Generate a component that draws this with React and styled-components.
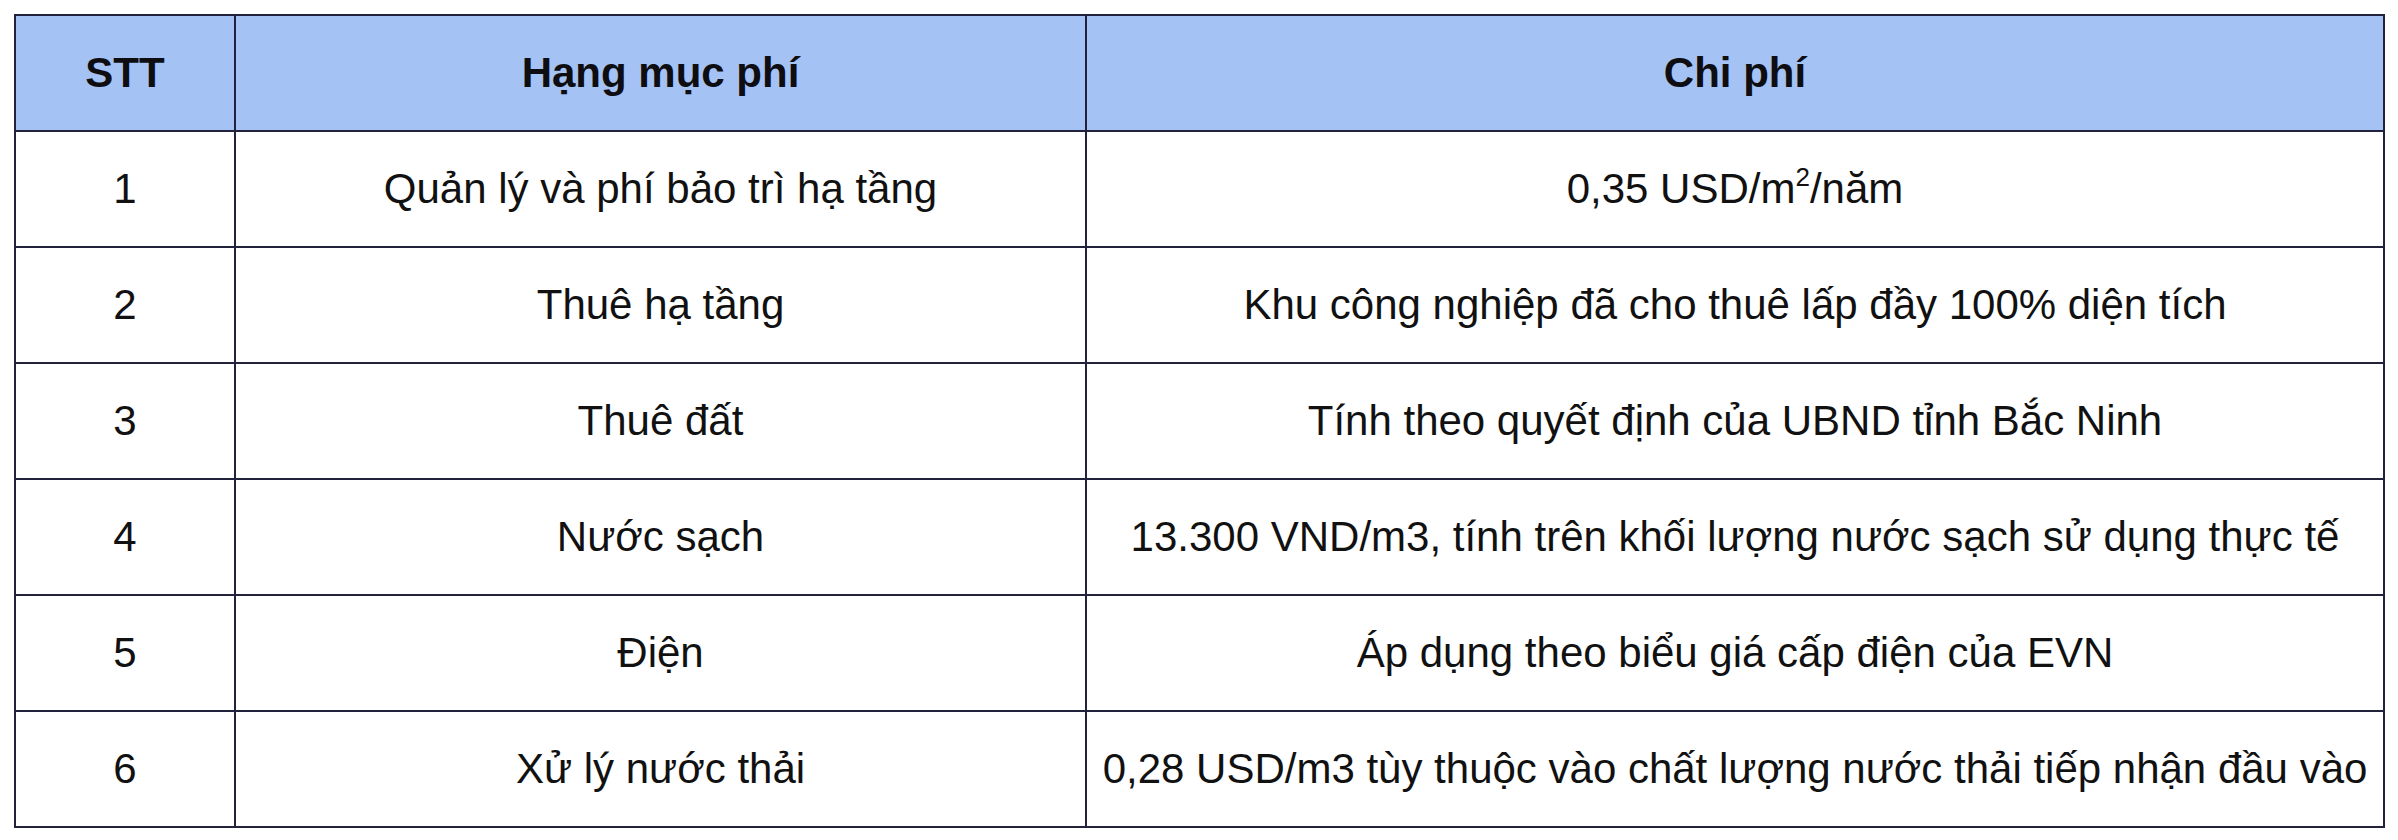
import React from 'react';
import styled, {createGlobalStyle} from 'styled-components';

const GlobalStyle = createGlobalStyle`
  html, body {
    margin: 0;
    padding: 0;
    background: #ffffff;
  }
  body {
    font-family: "Liberation Sans", Arial, sans-serif;
    color: #111111;
  }
`;

const Wrapper = styled.div`
  padding: 14px 15px 0 14px;
`;

const Table = styled.table`
  width: 2369px;
  table-layout: fixed;
  border-collapse: collapse;
  border: 2px solid #23223c;
`;

const Col = styled.col`
  width: ${props => props.w}px;
`;

const HeadCell = styled.th`
  height: 114px;
  padding: 0;
  background: #a4c2f4;
  border: 2px solid #23223c;
  font-size: 42px;
  font-weight: bold;
  color: #0d0d12;
  text-align: center;
  vertical-align: middle;
`;

const Cell = styled.td`
  height: 114px;
  padding: 0;
  border: 2px solid #23223c;
  font-size: 42px;
  color: #111111;
  text-align: center;
  vertical-align: middle;
  white-space: nowrap;
`;

const Sup = styled.span`
  font-size: 26px;
  vertical-align: 17px;
  line-height: 0;
`;

const rows = [
  ['1', 'Quản lý và phí bảo trì hạ tầng', null],
  ['2', 'Thuê hạ tầng', 'Khu công nghiệp đã cho thuê lấp đầy 100% diện tích'],
  ['3', 'Thuê đất', 'Tính theo quyết định của UBND tỉnh Bắc Ninh'],
  ['4', 'Nước sạch', '13.300 VND/m3, tính trên khối lượng nước sạch sử dụng thực tế'],
  ['5', 'Điện', 'Áp dụng theo biểu giá cấp điện của EVN'],
  ['6', 'Xử lý nước thải', '0,28 USD/m3 tùy thuộc vào chất lượng nước thải tiếp nhận đầu vào'],
];

const App = () => {
  return (
    <Wrapper>
      <GlobalStyle />
      <Table>
        <colgroup>
          <Col w={220} />
          <Col w={851} />
          <Col w={1298} />
        </colgroup>
        <thead>
          <tr>
            <HeadCell>STT</HeadCell>
            <HeadCell>Hạng mục phí</HeadCell>
            <HeadCell>Chi phí</HeadCell>
          </tr>
        </thead>
        <tbody>
          {rows.map(([n, name, cost]) => (
            <tr key={n}>
              <Cell>{n}</Cell>
              <Cell>{name}</Cell>
              <Cell>
                {cost === null ? <>0,35 USD/m<Sup>2</Sup>/năm</> : cost}
              </Cell>
            </tr>
          ))}
        </tbody>
      </Table>
    </Wrapper>
  );
};

export default App;
